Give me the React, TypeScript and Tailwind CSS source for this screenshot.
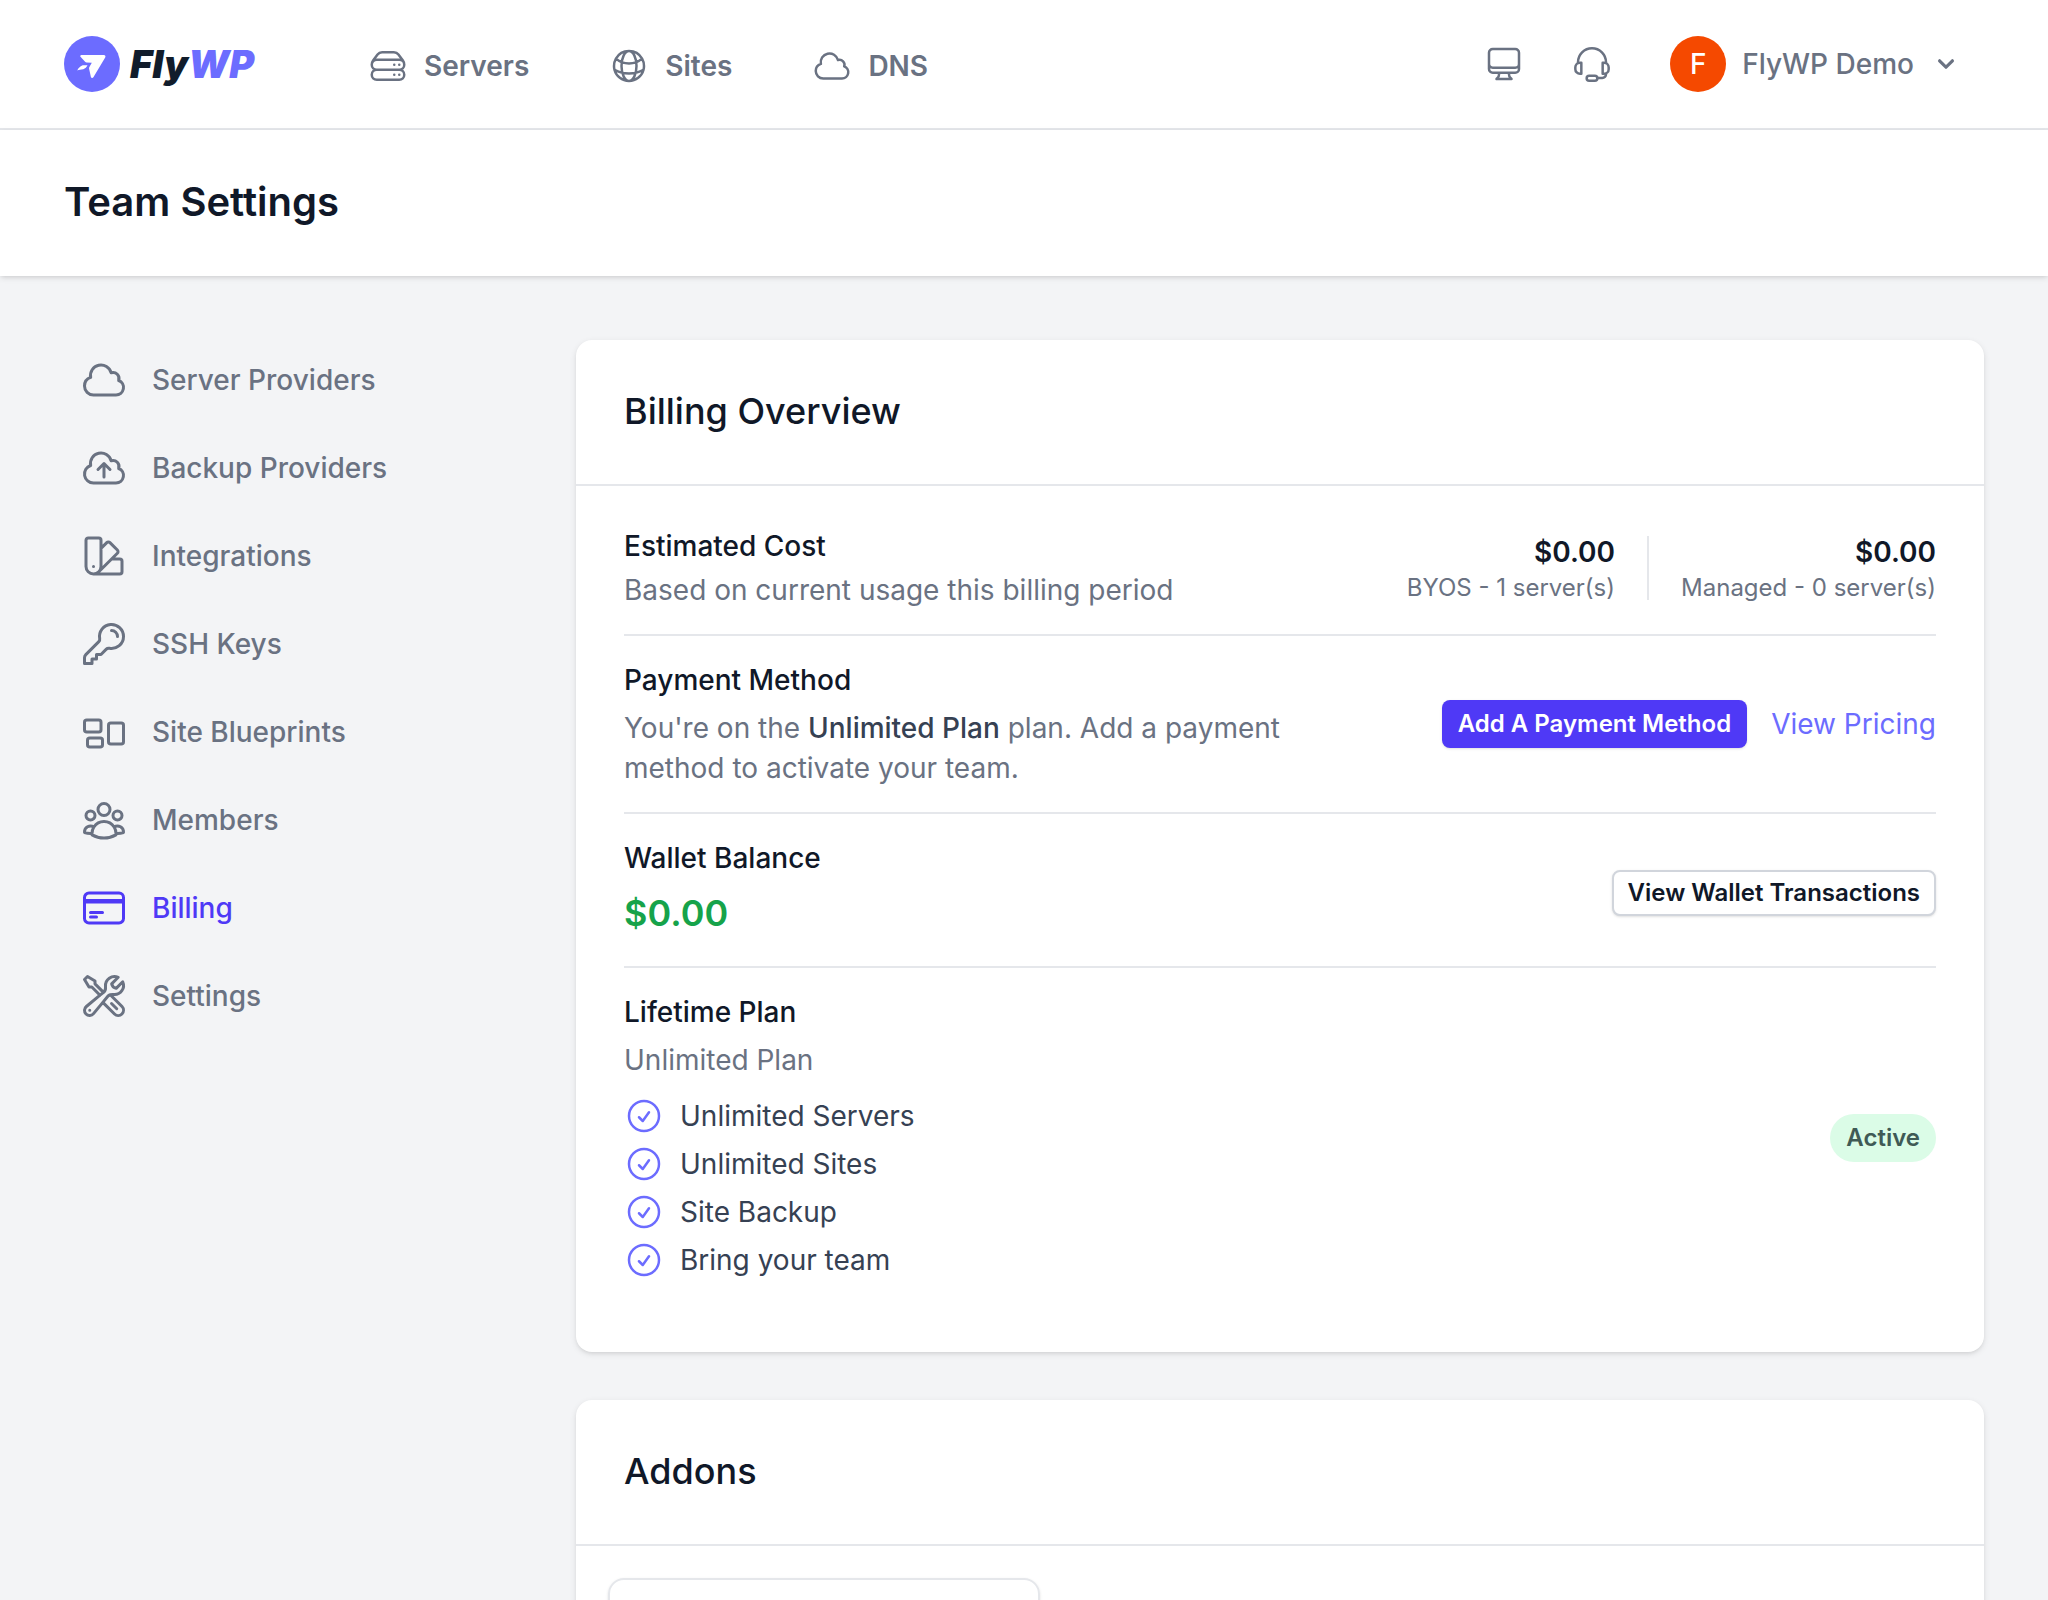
import type { ReactNode } from "react";
import { HiChevronDown } from "react-icons/hi";
import {
  HiOutlineCheckCircle,
  HiOutlineCloud,
  HiOutlineCloudArrowUp,
  HiOutlineComputerDesktop,
  HiOutlineCreditCard,
  HiOutlineGlobeAlt,
  HiOutlineKey,
  HiOutlineRectangleGroup,
  HiOutlineServerStack,
  HiOutlineSwatch,
  HiOutlineUserGroup,
  HiOutlineWrenchScrewdriver,
} from "react-icons/hi2";

const mainNav = [
  { label: "Servers", icon: HiOutlineServerStack },
  { label: "Sites", icon: HiOutlineGlobeAlt },
  { label: "DNS", icon: HiOutlineCloud },
];

const settingsNav = [
  { label: "Server Providers", icon: HiOutlineCloud },
  { label: "Backup Providers", icon: HiOutlineCloudArrowUp },
  { label: "Integrations", icon: HiOutlineSwatch },
  { label: "SSH Keys", icon: HiOutlineKey },
  { label: "Site Blueprints", icon: HiOutlineRectangleGroup },
  { label: "Members", icon: HiOutlineUserGroup },
  { label: "Billing", icon: HiOutlineCreditCard, active: true },
  { label: "Settings", icon: HiOutlineWrenchScrewdriver },
];

const planFeatures = ["Unlimited Servers", "Unlimited Sites", "Site Backup", "Bring your team"];

function Logo() {
  return (
    <a href="#" aria-label="FlyWP" className="flex w-48 items-center gap-2.5">
      <svg viewBox="0 0 56 56" className="size-14 shrink-0" aria-hidden="true">
        <circle cx="28" cy="28" r="28" fill="#6c6cff" />
        <path
          fill="#fff"
          d="M17.4 19h22.4c1.4 0 2.1 1.2 1.4 2.4L29.4 41.2c-.7 1.2-2.2 1-2.5-.3l-1.8-8.2c-.1-.6 0-1.1.3-1.6l2.4-4.3-5.2-.3c-.6 0-1.1-.3-1.5-.8l-4.4-4.6c-.8-.9-.4-2.1.7-2.1Z"
        />
        <path fill="#fff" d="M13.3 34.6c1.2-2.9 3.7-5.5 6.7-5.4l3.5.1c-.8 2-2.2 3.3-4.2 3.9-2.3.6-4.5.4-6 1.4Z" />
      </svg>
      <span className="text-[38px] leading-10 font-black text-[#111c2b] italic">
        Fly<span className="text-[#6c6cff]">WP</span>
      </span>
    </a>
  );
}

function HeadsetIcon() {
  return (
    <svg
      viewBox="0 0 24 24"
      fill="none"
      stroke="currentColor"
      strokeWidth="1.5"
      strokeLinecap="round"
      strokeLinejoin="round"
      className="size-10"
      aria-hidden="true"
    >
      <path d="M3.6 11.2V11a8.4 8.4 0 0 1 16.8 0v.2" />
      <path d="M5.6 11.2v6.7H4.8A2.8 2.8 0 0 1 2 15.1V14a2.8 2.8 0 0 1 2.8-2.8h.8Z" />
      <path d="M18.4 11.2v6.7h.8a2.8 2.8 0 0 0 2.8-2.8V14a2.8 2.8 0 0 0-2.8-2.8h-.8Z" />
      <rect x="8.8" y="19.1" width="6.4" height="3" rx="1.5" />
      <path d="M20.4 17.9v.3a2.2 2.2 0 0 1-2.2 2.2h-3" />
    </svg>
  );
}

function Header() {
  return (
    <header className="flex h-[130px] items-center border-b-2 border-gray-200 bg-white px-16">
      <Logo />
      <nav className="ml-28 flex items-center gap-20 pt-1">
        {mainNav.map(({ label, icon: Icon }) => (
          <a key={label} href="#" className="flex items-center gap-4 leading-10 font-semibold text-gray-500">
            <Icon className="size-10" />
            {label}
          </a>
        ))}
      </nav>
      <div className="ml-auto flex items-center text-gray-500">
        <button type="button" aria-label="Console">
          <HiOutlineComputerDesktop className="size-10" />
        </button>
        <button type="button" aria-label="Support" className="ml-12">
          <HeadsetIcon />
        </button>
        <button type="button" className="mr-[22px] ml-[58px] flex items-center gap-4 font-medium">
          <span className="flex size-14 items-center justify-center rounded-full bg-[#f54900] text-white">F</span>
          FlyWP Demo
          <HiChevronDown className="size-8" />
        </button>
      </div>
    </header>
  );
}

function Sidebar() {
  return (
    <nav className="flex w-[512px] shrink-0 flex-col gap-2 pr-8">
      {settingsNav.map(({ label, icon: Icon, active }) => (
        <a
          key={label}
          href="#"
          aria-current={active ? "page" : undefined}
          className={
            active
              ? "flex items-center gap-6 p-4 font-medium text-indigo-600"
              : "flex items-center gap-6 p-4 font-medium text-gray-500"
          }
        >
          <Icon className="size-12" />
          {label}
        </a>
      ))}
    </nav>
  );
}

function Card({ title, children }: { title: string; children: ReactNode }) {
  return (
    <section className="rounded-2xl bg-white shadow-[0_2px_6px_rgba(0,0,0,0.1),0_2px_4px_-2px_rgba(0,0,0,0.1)]">
      <h2 className="border-b-2 border-gray-200 px-12 pt-12 pb-[50px] text-4xl leading-[46px] font-medium text-gray-900">
        {title}
      </h2>
      {children}
    </section>
  );
}

function Row({ title, action, children }: { title: string; action: ReactNode; children: ReactNode }) {
  return (
    <div className="flex items-center justify-between gap-8 py-6">
      <div className="leading-10 text-gray-500">
        <h3 className="font-medium text-gray-900">{title}</h3>
        {children}
      </div>
      {action}
    </div>
  );
}

function Cost({ amount, label }: { amount: string; label: string }) {
  return (
    <div className="text-right">
      <p className="leading-10 font-semibold text-gray-900">{amount}</p>
      <p className="text-2xl text-gray-500">{label}</p>
    </div>
  );
}

function BillingOverview() {
  return (
    <Card title="Billing Overview">
      <div className="divide-y-2 divide-gray-200 px-12 pt-4 pb-11">
        <Row
          title="Estimated Cost"
          action={
            <div className="flex items-center gap-8">
              <Cost amount="$0.00" label="BYOS - 1 server(s)" />
              <div className="h-16 w-0.5 bg-gray-200" />
              <Cost amount="$0.00" label="Managed - 0 server(s)" />
            </div>
          }
        >
          <p className="mt-1">Based on current usage this billing period</p>
        </Row>
        <Row
          title="Payment Method"
          action={
            <div className="flex items-center gap-6">
              <button
                type="button"
                className="rounded-lg bg-indigo-600 px-4 py-2 text-2xl font-semibold text-white shadow-sm"
              >
                Add A Payment Method
              </button>
              <a href="#" className="text-[#6c6cff]">
                View Pricing
              </a>
            </div>
          }
        >
          <p className="mt-2 max-w-2xl">
            You're on the <strong className="font-medium text-gray-700">Unlimited Plan</strong> plan. Add a payment
            method to activate your team.
          </p>
        </Row>
        <Row
          title="Wallet Balance"
          action={
            <div className="pt-1.5">
              <button
                type="button"
                className="flex h-[46px] items-center rounded-lg border-2 border-gray-300 bg-white px-3.5 text-2xl font-semibold text-gray-900 shadow-sm"
              >
                View Wallet Transactions
              </button>
            </div>
          }
        >
          <p className="mt-2 pb-0.5 text-4xl leading-[54px] font-semibold text-[#16a34a]">$0.00</p>
        </Row>
        <Row
          title="Lifetime Plan"
          action={
            <span className="rounded-full bg-green-100 px-4 py-2 text-2xl font-semibold text-[#3f5a55]">Active</span>
          }
        >
          <p className="mt-2">Unlimited Plan</p>
          <ul className="mt-4 flex flex-col gap-2 pb-1 text-gray-700">
            {planFeatures.map((feature) => (
              <li key={feature} className="flex items-center gap-4">
                <HiOutlineCheckCircle className="size-10 text-[#6c6cff]" />
                {feature}
              </li>
            ))}
          </ul>
        </Row>
      </div>
    </Card>
  );
}

function Addons() {
  return (
    <Card title="Addons">
      <div className="grid grid-cols-3 gap-6 p-8">
        <div className="h-80 rounded-2xl border-2 border-gray-200 shadow-sm" />
      </div>
    </Card>
  );
}

export default function App() {
  return (
    <div className="h-screen overflow-hidden bg-gray-100 font-['Inter',sans-serif] text-[28px] leading-10">
      <Header />
      <div className="relative bg-white px-16 pt-12 pb-[50px] shadow-[0_2px_6px_rgba(0,0,0,0.1),0_2px_4px_-2px_rgba(0,0,0,0.1)]">
        <h1 className="text-[40px] leading-12 font-semibold text-gray-900">Team Settings</h1>
      </div>
      <div className="flex items-start p-16">
        <Sidebar />
        <main className="flex min-w-0 flex-1 flex-col gap-12">
          <BillingOverview />
          <Addons />
        </main>
      </div>
    </div>
  );
}
